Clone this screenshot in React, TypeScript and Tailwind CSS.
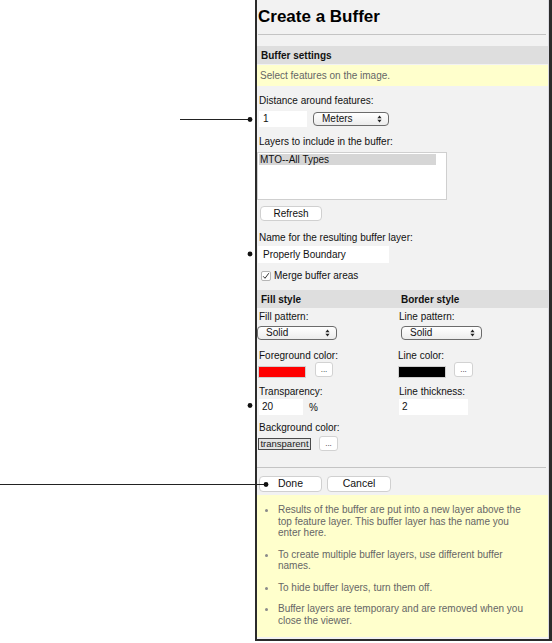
import React from "react";

function SelectArrows() {
  return (
    <svg width="5" height="8" viewBox="0 0 5 8" className="shrink-0">
      <path d="M2.5 0.5 L4.6 3.2 L0.4 3.2 Z" fill="#222" />
      <path d="M2.5 7.5 L4.6 4.8 L0.4 4.8 Z" fill="#222" />
    </svg>
  );
}

function Select({ value, width }: { value: string; width: string }) {
  return (
    <div
      className={`${width} h-[14px] flex items-center justify-between pl-[8px] pr-[6px] rounded-[4px] border border-[#6b6b6b] bg-gradient-to-b from-white to-[#ececec] text-[10px] leading-none text-[#111]`}
    >
      <span>{value}</span>
      <SelectArrows />
    </div>
  );
}

function DotsButton({ className = "" }: { className?: string }) {
  return (
    <div
      className={`w-[18px] h-[15px] rounded-[3px] border border-[#d2d2d2] bg-white flex items-end justify-center pb-[2px] text-[8px] leading-none text-[#222] ${className}`}
    >
      ...
    </div>
  );
}

function Label({ children, className = "" }: { children: React.ReactNode; className?: string }) {
  return <div className={`h-[12px] text-[10px] leading-[12px] text-[#111] whitespace-nowrap ${className}`}>{children}</div>;
}

function Callouts() {
  return (
    <svg className="absolute inset-0 pointer-events-none" width="552" height="643" viewBox="0 0 552 643">
      <line x1="180" y1="119.5" x2="250" y2="119.5" stroke="#222" strokeWidth="1.2" />
      <circle cx="250" cy="119.5" r="2.4" fill="#111" />
      <circle cx="250" cy="254" r="2.4" fill="#111" />
      <circle cx="250" cy="405.5" r="2.4" fill="#111" />
      <line x1="0" y1="484.5" x2="266" y2="484.5" stroke="#222" strokeWidth="1.2" />
      <circle cx="266" cy="484.5" r="2.4" fill="#111" />
    </svg>
  );
}

const notes: React.ReactNode[] = [
  <>
    Results of the buffer are put into a new layer above the
    <br />
    top feature layer. This buffer layer has the name you
    <br />
    enter here.
  </>,
  <>
    To create multiple buffer layers, use different buffer
    <br />
    names.
  </>,
  <>To hide buffer layers, turn them off.</>,
  <>
    Buffer layers are temporary and are removed when you
    <br />
    close the viewer.
  </>,
];

export default function App() {
  return (
    <div className="relative w-[552px] h-[643px] bg-white flex font-['Liberation_Sans',Arial,sans-serif]">
      <div className="w-[255px] shrink-0" />
      <div className="w-[297px] h-[641px] border-l-2 border-r-[3px] border-b-2 border-[#2b2b2b] bg-[#dcdce2]">
        <div className="h-full mr-[1px] bg-[#f2f2f2] flex flex-col">
          {/* title */}
          <div className="mt-[7px] ml-[1px] h-[20px] text-[17px] leading-[20px] font-bold text-black">Create a Buffer</div>
          <div className="mt-[7px] ml-[1px] mr-[2px] h-px bg-[#c4c4c4]" />

          {/* buffer settings */}
          <div className="mt-[11px] h-[18px] bg-[#dedede] flex items-center pl-[4px] text-[10px] font-bold text-[#111]">
            Buffer settings
          </div>
          <div className="mt-[1px] h-[21px] bg-[#ffffcc] flex items-center pl-[3px] text-[10px] text-[#666]">
            Select features on the image.
          </div>

          <Label className="mt-[9px] pl-[2px]">Distance around features:</Label>
          <div className="mt-[4px] h-[16px] flex items-center">
            <div className="ml-[2px] w-[48px] h-[16px] bg-white pl-[4px] text-[10px] leading-[16px] text-[#111]">1</div>
            <div className="ml-[6px]">
              <Select value="Meters" width="w-[76px]" />
            </div>
          </div>

          <Label className="mt-[9px] pl-[2px]">Layers to include in the buffer:</Label>
          <div className="mt-[4px] w-[190px] h-[48px] border border-[#cfcfcf] bg-white p-px">
            <div className="w-[177px] h-[11px] bg-[#d6d6d6] pl-[1px] text-[10px] leading-[11px] text-[#111]">MTO--All Types</div>
          </div>
          <div className="mt-[6px] ml-[3px] w-[62px] h-[15px] rounded-[4px] border border-[#d0d0d0] bg-white flex items-center justify-center text-[10px] text-[#111]">
            Refresh
          </div>

          <Label className="mt-[11px] pl-[2px]">Name for the resulting buffer layer:</Label>
          <div className="mt-[2px] ml-[1px] w-[131px] h-[17px] bg-white pl-[5px] text-[10px] leading-[17px] text-[#111]">
            Properly Boundary
          </div>
          <div className="mt-[7px] h-[11px] flex items-center">
            <div className="ml-[4px] w-[10px] h-[10px] rounded-[2px] border border-[#b5b5b5] bg-white flex items-center justify-center">
              <svg width="8" height="8" viewBox="0 0 8 8">
                <path d="M1.2 4.3 L3 6.3 L6.8 1.2" fill="none" stroke="#333" strokeWidth="1" />
              </svg>
            </div>
            <span className="ml-[3px] text-[10px] text-[#111]">Merge buffer areas</span>
          </div>

          {/* style header */}
          <div className="mt-[9px] h-[18px] bg-[#dedede] flex items-center text-[10px] font-bold text-[#111]">
            <span className="w-[144px] pl-[4px]">Fill style</span>
            <span>Border style</span>
          </div>

          <div className="flex">
            {/* fill column */}
            <div className="w-[141px] flex flex-col">
              <Label className="mt-[3px] pl-[2px]">Fill pattern:</Label>
              <div className="mt-[3px]">
                <Select value="Solid" width="w-[80px]" />
              </div>
              <Label className="mt-[10px] pl-[2px]">Foreground color:</Label>
              <div className="h-[16px] flex items-start">
                <div className="mt-[4px] ml-[1px] w-[48px] h-[12px] bg-[#ff0000] border border-[#cfcfcf]" />
                <DotsButton className="ml-[9px]" />
              </div>
              <Label className="mt-[8px] pl-[2px]">Transparency:</Label>
              <div className="mt-[1px] h-[16px] flex items-center">
                <div className="ml-[2px] w-[44px] h-[16px] bg-white pl-[3px] text-[10px] leading-[16px] text-[#111]">20</div>
                <span className="ml-[6px] text-[10px] text-[#111]">%</span>
              </div>
              <Label className="mt-[7px] pl-[2px]">Background color:</Label>
              <div className="mt-[2px] h-[15px] flex items-center">
                <div className="ml-[1px] w-[53px] h-[12px] border border-[#4a4a4a] bg-[#e4e4e4] text-[9.5px] leading-[10px] text-[#222] text-center">
                  transparent
                </div>
                <DotsButton className="ml-[8px] w-[19px]" />
              </div>
            </div>

            {/* border column */}
            <div className="flex flex-col">
              <Label className="mt-[3px] pl-[1px]">Line pattern:</Label>
              <div className="mt-[3px] ml-[3px]">
                <Select value="Solid" width="w-[81px]" />
              </div>
              <Label className="mt-[10px]">Line color:</Label>
              <div className="h-[16px] flex items-start">
                <div className="mt-[4px] w-[48px] h-[12px] bg-black border border-[#cfcfcf]" />
                <DotsButton className="ml-[8px] w-[19px]" />
              </div>
              <Label className="mt-[8px] pl-[1px]">Line thickness:</Label>
              <div className="mt-[1px] ml-[1px] w-[69px] h-[16px] bg-white pl-[3px] text-[10px] leading-[16px] text-[#111]">2</div>
            </div>
          </div>

          <div className="mt-[16px] mr-[2px] h-px bg-[#c4c4c4]" />

          <div className="mt-[8px] flex">
            <div className="ml-[2px] w-[63px] h-[16px] rounded-[4px] border border-[#d0d0d0] bg-white flex items-center justify-center text-[10.5px] text-[#111]">
              Done
            </div>
            <div className="ml-[5px] w-[64px] h-[16px] rounded-[4px] border border-[#d0d0d0] bg-white flex items-center justify-center text-[10.5px] text-[#111]">
              Cancel
            </div>
          </div>

          {/* notes */}
          <div className="mt-[3px] mb-[2px] flex-1 bg-[#ffffcc] pt-[9px]">
            <ul className="flex flex-col gap-[10px]">
              {notes.map((n, i) => (
                <li key={i} className="flex">
                  <span className="mt-[5px] ml-[8px] w-[3px] h-[3px] rounded-full bg-[#8a8a8a] shrink-0" />
                  <span className="ml-[10px] text-[10px] leading-[11.5px] text-[#666] whitespace-nowrap">{n}</span>
                </li>
              ))}
            </ul>
          </div>
        </div>
      </div>
      <Callouts />
    </div>
  );
}
